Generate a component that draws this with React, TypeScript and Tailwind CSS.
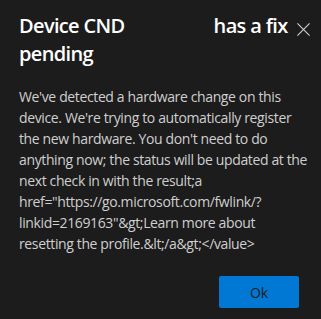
const body = [
  "We've detected a hardware change on this",
  "device. We're trying to automatically register",
  "the new hardware. You don't need to do",
  "anything now; the status will be updated at the",
  'next check in with the result;a',
  'href="https://go.microsoft.com/fwlink/?',
  'linkid=2169163"&gt;Learn more about',
  'resetting the profile.&lt;/a&gt;</value>',
]

export default function App() {
  return (
    <div className="w-[321px] h-[319px] bg-[#1c1c1c] px-[19px] pt-[12px] flex flex-col font-['Open_Sans',sans-serif] overflow-hidden">
      {/* Header */}
      <div className="flex items-start">
        <h1 className="flex-1 text-[20px] leading-[28px] font-semibold text-white tracking-[-0.65px] whitespace-nowrap">
          Device CND<span className="inline-block w-[89px]" />has a fix
          <br />
          pending
        </h1>
        <button className="mt-[9px] -mr-[9px] w-[16px] h-[16px] flex items-center justify-center text-[#d6d6d6]">
          <svg viewBox="0 0 16 16" className="w-[15px] h-[15px]" fill="none" stroke="currentColor" strokeWidth="1.1">
            <path d="M1.5 1.5 L14.5 14.5 M14.5 1.5 L1.5 14.5" />
          </svg>
        </button>
      </div>

      {/* Body */}
      <p className="mt-[18px] text-[14px] leading-[21px] text-[#cfcfcf] tracking-[-0.37px] whitespace-nowrap">
        {body.map((line, i) => (
          <span key={i} className="block">{line}</span>
        ))}
      </p>

      {/* Footer */}
      <div className="mt-auto mb-[11px] flex justify-end pr-[3px]">
        <button className="w-[80px] h-[32px] rounded-[2px] bg-[#0078d4] text-[14px] text-[#1c1c1c]">
          Ok
        </button>
      </div>
    </div>
  )
}
